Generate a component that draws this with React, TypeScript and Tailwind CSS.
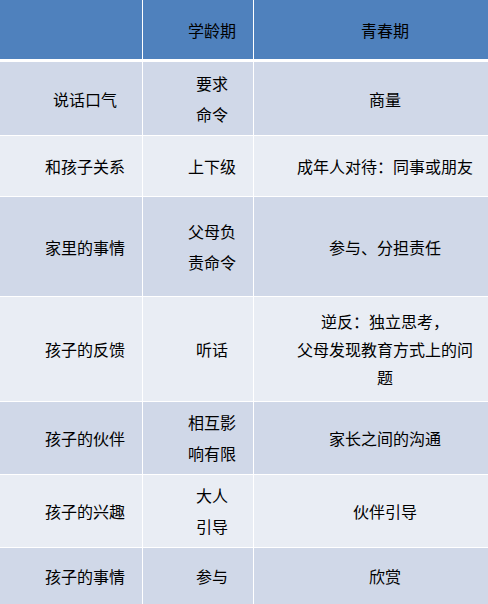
import * as React from 'react'

type Row = {
  h: string
  bg: string
  cells: [string, string, string]
}

const rows: Row[] = [
  { h: 'h-[73px]', bg: 'bg-[#d0d8e8]', cells: ['说话口气', '要求\n命令', '商量'] },
  { h: 'h-[60px]', bg: 'bg-[#e9edf4]', cells: ['和孩子关系', '上下级', '成年人对待：同事或朋友'] },
  { h: 'h-[99px]', bg: 'bg-[#d0d8e8]', cells: ['家里的事情', '父母负责命令', '参与、分担责任'] },
  { h: 'h-[104px]', bg: 'bg-[#e9edf4]', cells: ['孩子的反馈', '听话', '逆反：独立思考，\n父母发现教育方式上的问题'] },
  { h: 'h-[72px]', bg: 'bg-[#d0d8e8]', cells: ['孩子的伙伴', '相互影响有限', '家长之间的沟通'] },
  { h: 'h-[72px]', bg: 'bg-[#e9edf4]', cells: ['孩子的兴趣', '大人\n引导', '伙伴引导'] },
  { h: 'h-[56px]', bg: 'bg-[#d0d8e8]', cells: ['孩子的事情', '参与', '欣赏'] },
]

function Cell({ text, bg, lead }: { text: string; bg: string; lead: string }) {
  return (
    <div className={`${bg} flex items-center justify-center pl-[38px] pr-[10px] text-center`}>
      <div className={`${lead} whitespace-pre-line`}>{text}</div>
    </div>
  )
}

export default function App() {
  return (
    <div
      className="w-[488px] h-[604px] overflow-hidden bg-white text-[16px] text-black flex flex-col"
      style={{ fontFamily: '"Noto Sans CJK SC", "Noto Sans", sans-serif' }}
    >
      <div className="grid grid-cols-[142px_110px_234px] gap-x-px h-[59px] shrink-0">
        <div className="bg-[#4f81bd]" />
        <Cell text="学龄期" bg="bg-[#4f81bd]" lead="leading-[28px]" />
        <Cell text="青春期" bg="bg-[#4f81bd]" lead="leading-[28px]" />
      </div>
      <div className="flex flex-col gap-px mt-[3px]">
        {rows.map((row, i) => (
          <div key={i} className={`grid grid-cols-[142px_110px_234px] gap-x-px shrink-0 ${row.h}`}>
            <Cell text={row.cells[0]} bg={row.bg} lead="leading-[28px]" />
            <Cell text={row.cells[1]} bg={row.bg} lead="leading-[31px]" />
            <Cell text={row.cells[2]} bg={row.bg} lead="leading-[28px]" />
          </div>
        ))}
      </div>
    </div>
  )
}
